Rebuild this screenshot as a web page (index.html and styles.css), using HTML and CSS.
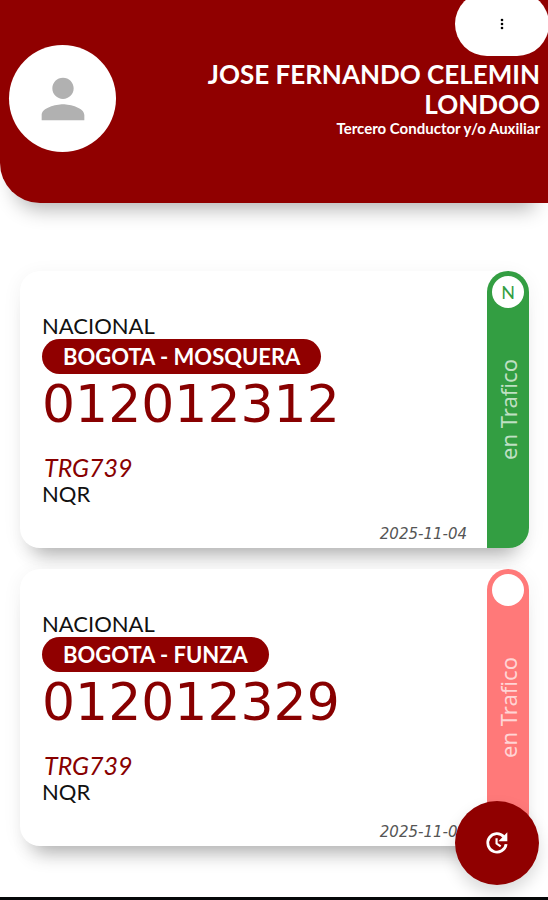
FILE: index.html
```html
<!DOCTYPE html>
<html lang="es">
<head>
  <meta charset="utf-8">
  <meta name="viewport" content="width=device-width, initial-scale=1">
  <title>Viajes</title>
  <link rel="stylesheet" href="styles.css">
</head>
<body>

<header class="header">
  <div class="avatar">
    <svg viewBox="0 0 24 24" width="64" height="64" fill="#b1b1b1"><path d="M12 12c2.210 0 4-1.790 4-4s-1.790-4-4-4-4 1.790-4 4 1.790 4 4 4zm0 2c-2.670 0-8 1.340-8 4v2h16v-2c0-2.660-5.330-4-8-4z"/></svg>
  </div>
  <div class="user">
    <h1 class="user-name">JOSE FERNANDO CELEMIN LONDOO</h1>
    <p class="user-role">Tercero Conductor y/o Auxiliar</p>
  </div>
  <button class="menu-button" type="button" aria-label="Menu">
    <svg viewBox="0 0 4 12" width="4" height="12"><circle cx="2" cy="2" r="1.300"/><circle cx="2" cy="6" r="1.300"/><circle cx="2" cy="10" r="1.300"/></svg>
  </button>
</header>

<main class="trips">
  <article class="card">
    <div class="card-body">
      <p class="label">NACIONAL</p>
      <p class="route">BOGOTA - MOSQUERA</p>
      <p class="number">012012312</p>
      <p class="plate">TRG739</p>
      <p class="label">NQR</p>
      <time class="date" datetime="2025-11-04">2025-11-04</time>
    </div>
    <div class="status">
      <span class="badge">N</span>
      <span class="status-text">en Trafico</span>
    </div>
  </article>

  <article class="card">
    <div class="card-body">
      <p class="label">NACIONAL</p>
      <p class="route">BOGOTA - FUNZA</p>
      <p class="number">012012329</p>
      <p class="plate">TRG739</p>
      <p class="label">NQR</p>
      <time class="date" datetime="2025-11-04">2025-11-04</time>
    </div>
    <div class="status status-late">
      <span class="badge"></span>
      <span class="status-text">en Trafico</span>
    </div>
  </article>
</main>

<button class="refresh-button" type="button" aria-label="Actualizar">
  <svg viewBox="0 0 24 24" width="26" height="26" fill="none" stroke="#fff" stroke-width="2.600"><path d="M18.300 6.200A8.500 8.500 0 1 0 20.400 13"/><path d="M11.600 7.500v5l3.800 2.600" stroke-width="2"/><path d="M21.500 2v8.400h-8.200z" fill="#fff" stroke="none"/></svg>
</button>

</body>
</html>
```
FILE: styles.css
```css
* {
  box-sizing: border-box;
}
body {
  margin: 0;
  min-height: 100vh;
  background: #fff;
  border-bottom: 3px solid #060809;
  font-family: Lato, "Liberation Sans", sans-serif;
  color: #111;
}
h1, p {
  margin: 0;
}
button {
  display: flex;
  align-items: center;
  justify-content: center;
  padding: 0;
  border: 0;
  cursor: pointer;
}

.header {
  position: relative;
  display: flex;
  align-items: flex-start;
  justify-content: space-between;
  gap: 48px;
  padding: 45px 8px 51px 9px;
  background: #900000;
  border-radius: 0 0 0 40px;
  box-shadow: 0 20px 20px -14px rgba(0, 0, 0, 0.3);
  color: #fff;
}
.avatar {
  display: flex;
  flex: none;
  align-items: center;
  justify-content: center;
  width: 107px;
  height: 107px;
  border-radius: 50%;
  background: #fff;
}
.user {
  padding-top: 14px;
  text-align: right;
}
.user-name {
  font-size: 26px;
  line-height: 30px;
  font-weight: 700;
}
.user-role {
  font-size: 15px;
  line-height: 18px;
  font-weight: 700;
}
.menu-button {
  position: absolute;
  top: -8px;
  right: -1px;
  width: 94px;
  height: 64px;
  border-radius: 32px;
  background: #fff;
}

.trips {
  display: flex;
  flex-direction: column;
  gap: 21px;
  padding: 68px 19px 48px 20px;
}
.card {
  display: flex;
  border-radius: 20px;
  background: #fff;
  box-shadow: 0 20px 20px -14px rgba(0, 0, 0, 0.3), 0 4px 20px rgba(0, 0, 0, 0.06);
}
.card-body {
  display: flex;
  flex: 1;
  flex-direction: column;
  align-items: flex-start;
  padding: 42px 20px 4px 22px;
}
.label {
  font-size: 22px;
  line-height: 26px;
}
.route {
  padding: 0 21px;
  border-radius: 18px;
  background: #900000;
  color: #fff;
  font-size: 22px;
  line-height: 35px;
  font-weight: 700;
}
.number {
  font-family: "DejaVu Sans", sans-serif;
  font-size: 52px;
  line-height: 60px;
  color: #880000;
}
.plate {
  padding-top: 20px;
  padding-left: 2px;
  font-size: 25px;
  line-height: 27px;
  font-style: italic;
  color: #880000;
}
.date {
  align-self: flex-end;
  margin-top: 17px;
  font-family: "DejaVu Sans", sans-serif;
  font-size: 15px;
  line-height: 20px;
  font-style: italic;
  color: #555;
}
.status {
  display: flex;
  flex-direction: column;
  align-items: center;
  width: 42px;
  padding-top: 5px;
  border-radius: 21px 21px 20px 0;
  background: #339e42;
  color: #339e42;
}
.status-late {
  background: #ff7979;
}
.badge {
  width: 32px;
  height: 32px;
  border-radius: 50%;
  background: #fff;
  font-size: 18px;
  line-height: 32px;
  text-align: center;
}
.status-text {
  flex: 1;
  padding-top: 37px;
  writing-mode: vertical-rl;
  transform: rotate(180deg);
  font-family: "Noto Sans", sans-serif;
  font-size: 22px;
  line-height: 24px;
  text-align: center;
  color: rgba(255, 255, 255, 0.7);
}

.refresh-button {
  position: fixed;
  right: 9px;
  bottom: 15px;
  width: 84px;
  height: 84px;
  border-radius: 50%;
  background: #900000;
  box-shadow: 0 8px 16px rgba(0, 0, 0, 0.15);
}
```
